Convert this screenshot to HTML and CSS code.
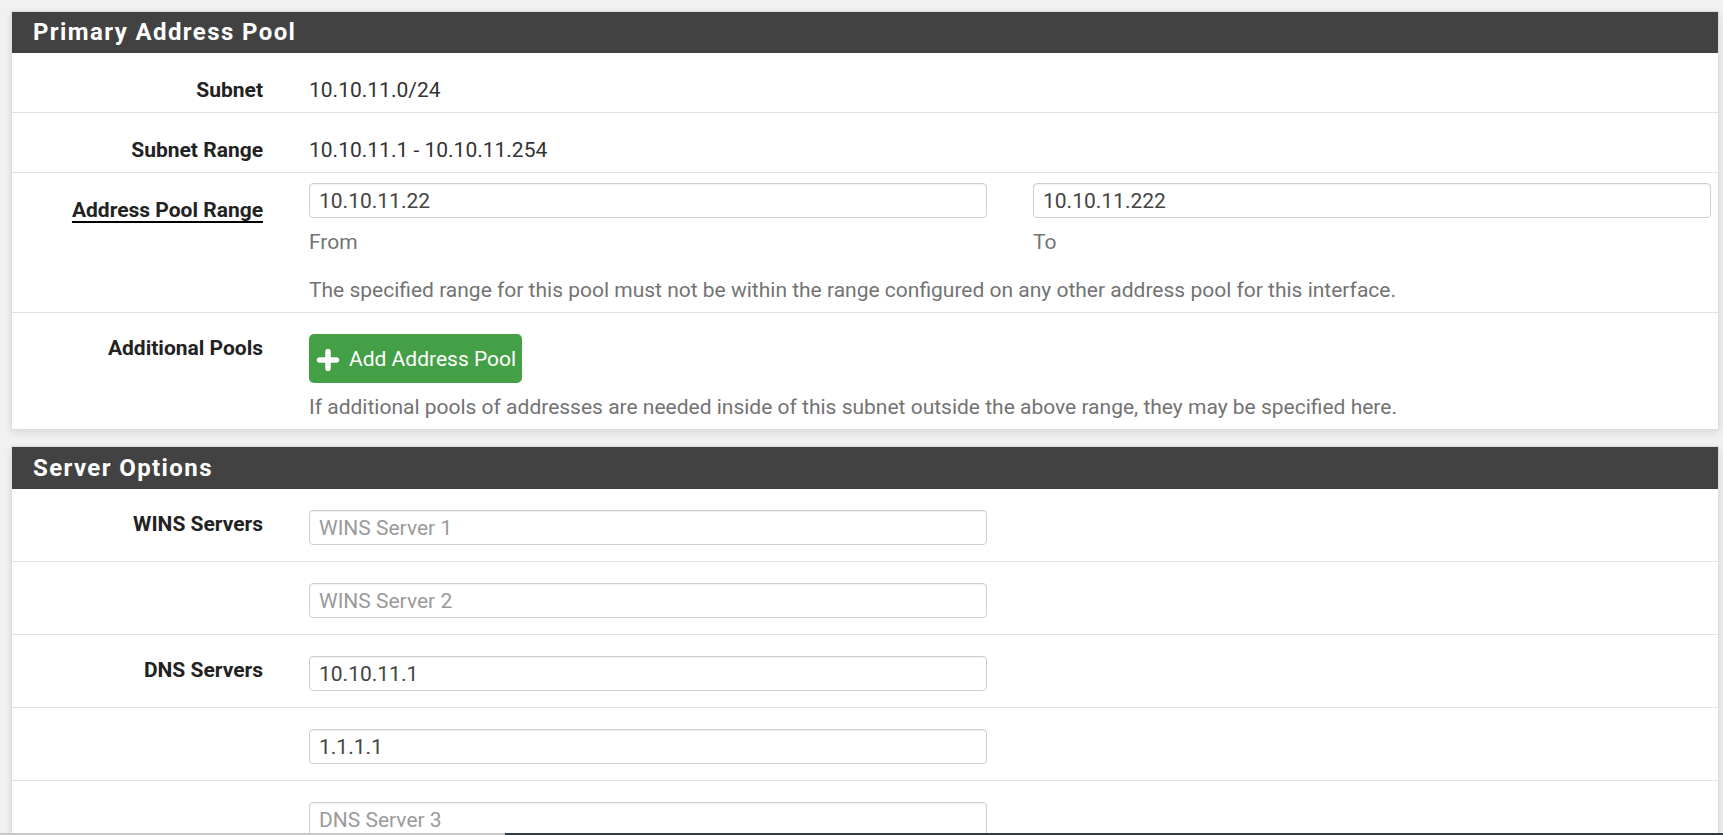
FILE: index.html
```html
<!DOCTYPE html>
<html lang="en">
<head>
<meta charset="utf-8">
<title>DHCP Server</title>
<link rel="stylesheet" href="styles.css">
</head>
<body>
<div class="page">
  <section class="panel">
    <h2 class="panel-heading">Primary Address Pool</h2>
    <div class="panel-body">
      <div class="row row-static">
        <div class="label">Subnet</div>
        <div class="value">10.10.11.0/24</div>
      </div>
      <div class="row row-static">
        <div class="label">Subnet Range</div>
        <div class="value">10.10.11.1 - 10.10.11.254</div>
      </div>
      <div class="row row-range">
        <div class="label label-req"><span>Address Pool Range</span></div>
        <div class="field">
          <input class="input" type="text" value="10.10.11.22">
          <div class="sub">From</div>
        </div>
        <div class="field">
          <input class="input" type="text" value="10.10.11.222">
          <div class="sub">To</div>
        </div>
        <div class="help help-wide">The specified range for this pool must not be within the range configured on any other address pool for this interface.</div>
      </div>
      <div class="row row-button">
        <div class="label">Additional Pools</div>
        <div class="field field-wide">
          <button class="btn-add" type="button">
            <svg class="plus" viewBox="0 0 22 22" width="22" height="22" aria-hidden="true"><path d="M11 2.5v17M2.5 11h17" stroke="#fff" stroke-width="5.5" stroke-linecap="round" fill="none"/></svg>
            <span>Add Address Pool</span>
          </button>
          <div class="help help-button">If additional pools of addresses are needed inside of this subnet outside the above range, they may be specified here.</div>
        </div>
      </div>
    </div>
  </section>

  <section class="panel">
    <h2 class="panel-heading">Server Options</h2>
    <div class="panel-body">
      <div class="row row-input">
        <div class="label">WINS Servers</div>
        <input class="input" type="text" placeholder="WINS Server 1">
      </div>
      <div class="row row-input">
        <div class="label"></div>
        <input class="input" type="text" placeholder="WINS Server 2">
      </div>
      <div class="row row-input">
        <div class="label">DNS Servers</div>
        <input class="input" type="text" value="10.10.11.1">
      </div>
      <div class="row row-input">
        <div class="label"></div>
        <input class="input" type="text" value="1.1.1.1">
      </div>
      <div class="row row-input">
        <div class="label"></div>
        <input class="input" type="text" placeholder="DNS Server 3">
      </div>
      <div class="row row-input">
        <div class="label"></div>
        <input class="input" type="text" placeholder="DNS Server 4">
      </div>
    </div>
  </section>
</div>
<div class="edge"><span class="edge-light"></span><span class="edge-dark"></span></div>
</body>
</html>
```

FILE: styles.css
```css
html, body {
  margin: 0;
  padding: 0;
}

body {
  background: #f1f1f1;
  font-family: Roboto, "Liberation Sans", Arial, sans-serif;
  font-size: 21px;
  line-height: 30px;
  color: #333;
  overflow: hidden;
}

.page {
  padding: 11px 4px 0 11px;
}

.panel {
  background: #fff;
  border: 1px solid #dcdcdc;
  box-shadow: 0 3px 8px rgba(0, 0, 0, 0.10);
  margin-bottom: 16px;
}

.panel-heading {
  margin: 0;
  height: 41px;
  line-height: 41px;
  padding: 0 21px;
  background: #424242;
  color: #fff;
  font-size: 24px;
  font-weight: 700;
  letter-spacing: 1.4px;
}

.panel + .panel .panel-heading {
  height: 42px;
  line-height: 42px;
}

.row {
  display: grid;
  grid-template-columns: 251px 678px 678px;
  column-gap: 46px;
  border-bottom: 1px solid #e3e3e3;
}

.row:last-child {
  border-bottom: none;
}

.label {
  grid-column: 1;
  text-align: right;
  font-weight: 700;
  color: #222;
  line-height: 30px;
}

.label-req span {
  text-decoration: underline;
  text-decoration-color: #000;
  text-decoration-thickness: 2px;
  text-underline-offset: 4px;
}

.value {
  grid-column: 2 / 4;
  color: #333;
}

.row-static {
  padding: 22px 0 7px;
}

.row-range {
  padding: 10px 0 7px;
}

.row-range .label {
  padding-top: 12px;
}

.field {
  display: flex;
  flex-direction: column;
}

.field-wide {
  grid-column: 2 / 4;
  align-items: flex-start;
}

.input {
  display: block;
  box-sizing: border-box;
  width: 100%;
  height: 35px;
  margin: 0;
  padding: 0 9px;
  border: 1px solid #cfcfcf;
  border-radius: 4px;
  background: #fff;
  box-shadow: inset 0 1px 1px rgba(0, 0, 0, 0.06);
  font-family: Roboto, "Liberation Sans", Arial, sans-serif;
  font-size: 21px;
  color: #444;
  outline: none;
}

.input::placeholder {
  color: #9a9a9a;
}

.sub {
  margin-top: 9px;
  color: #737373;
}

.help {
  color: #737373;
  white-space: nowrap;
}

.help-wide {
  grid-column: 2 / 4;
  margin-top: 18px;
}

.row-button {
  padding: 20px 0 7px;
}

.btn-add {
  display: inline-flex;
  align-items: center;
  height: 49px;
  margin-top: 1px;
  padding: 0 6px 0 7px;
  border: none;
  border-radius: 5px;
  background: #43a047;
  color: #fff;
  font-family: Roboto, "Liberation Sans", Arial, sans-serif;
  font-size: 21px;
  cursor: pointer;
}

.plus {
  display: block;
  width: 24px;
  height: 22px;
  margin: 2px 9px 0 0;
}

.help-button {
  margin-top: 9px;
}

.row-input {
  padding: 20px 0 16px;
}

.row-input .input {
  grid-column: 2;
  margin-top: 1px;
}

.edge {
  position: fixed;
  left: 0;
  right: 0;
  bottom: 0;
  height: 2px;
  display: flex;
}

.edge-light {
  width: 505px;
  background: #c8c8c8;
}

.edge-dark {
  flex: 1;
  background: #2e3b42;
}
```
